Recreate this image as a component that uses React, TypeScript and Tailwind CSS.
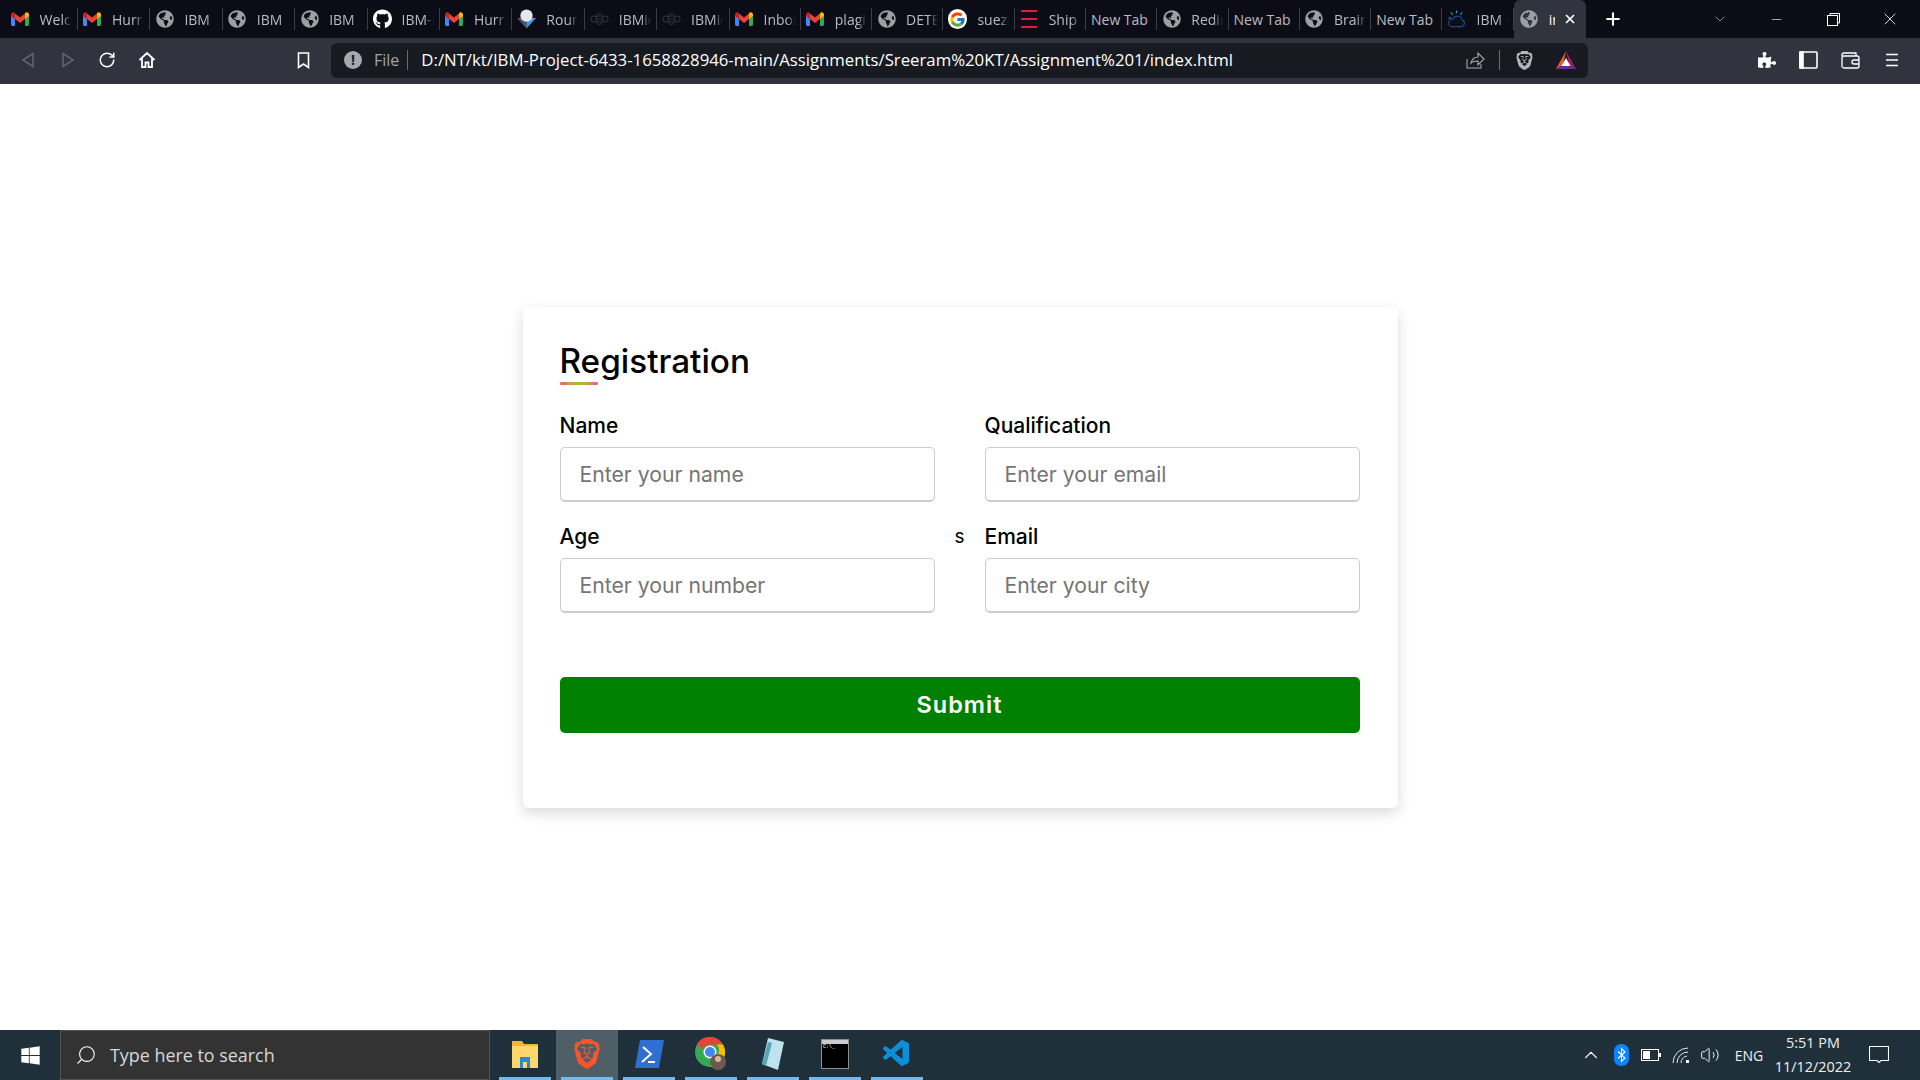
import React from 'react';
import { ChevronDown, ChevronUp, Minus, Plus, RotateCw, Search, Volume2, X } from 'lucide-react';
import { FaGithub, FaGlobeAmericas, FaPuzzlePiece, FaWindows } from 'react-icons/fa';
import { FcGoogle } from 'react-icons/fc';
import { SiBrave } from 'react-icons/si';
import { VscVscode } from 'react-icons/vsc';

const GmailIcon = () => (
  <svg width="18" height="14" viewBox="0 0 18 14">
    <path d="M0 2.5V12.6c0 .8.6 1.4 1.3 1.4H4V6.5z" fill="#4285f4" />
    <path d="M18 2.5V12.6c0 .8-.6 1.4-1.3 1.4H14V6.5z" fill="#34a853" />
    <path d="M4 7V1.6L9 5.6l5-4V7L9 11z" fill="#ea4335" />
    <path d="M0 2.5C0 .7 2-.5 3.3.5L4 1.6V7L0 4z" fill="#c5221f" />
    <path d="M18 2.5c0-1.8-2-3-3.300-2L14 1.600V7l4-3z" fill="#fbbc04" />
  </svg>
);

const CubeIcon = () => (
  <svg width="20" height="20" viewBox="0 0 20 20">
    <path d="M0 9l10 11V9z" fill="#4b5563" />
    <path d="M20 9L10 20V9z" fill="#3d9be0" />
    <circle cx="10" cy="6.500" r="6.500" fill="#e5e7eb" />
  </svg>
);

const BeeIcon = () => (
  <svg width="20" height="14" viewBox="0 0 20 14" fill="none" stroke="#2b2f38" strokeWidth="1.200">
    <ellipse cx="10" cy="7" rx="3.500" ry="6" />
    <circle cx="4" cy="7" r="3" />
    <circle cx="16" cy="7" r="3" />
    <path d="M6.500 4h7M6.500 7h7M6.500 10h7" />
  </svg>
);

const ShipIcon = () => (
  <svg width="16" height="18" viewBox="0 0 16 18" fill="#e11d3c">
    <rect y="0" width="16" height="2" />
    <rect y="8" width="16" height="2" />
    <rect y="16" width="16" height="2" />
  </svg>
);

const IbmCloudIcon = () => (
  <svg width="20" height="20" viewBox="0 0 20 20" fill="none" strokeWidth="1.200">
    <path d="M5 18h10a3.500 3.500 0 0 0 1-6.800A5 5 0 0 0 6.500 10 4 4 0 0 0 5 18z" stroke="#14508c" />
    <path d="M10 1v3M4 3l2 2.500M16 3l-2 2.500M1.500 9h2.500" stroke="#1ba1c4" />
  </svg>
);

const BatIcon = () => (
  <svg width="20" height="18" viewBox="0 0 20 18">
    <path d="M10 0L0 18h6z" fill="#f15a29" />
    <path d="M10 0l10 18h-6z" fill="#9e1f63" />
    <path d="M0 18l4-3h12l4 3z" fill="#662d91" />
    <path d="M10 7l4.500 8h-9z" fill="#ffffff" />
  </svg>
);

const BluetoothIcon = () => (
  <svg width="15" height="22" viewBox="0 0 15 22">
    <rect width="15" height="22" rx="7" fill="#0a84ff" />
    <path d="M4 7.500l7 6.500-3.500 3.500V4.500L11 8l-7 6.500" fill="none" stroke="#fff" strokeWidth="1.100" />
  </svg>
);

const BatteryIcon = () => (
  <svg width="20" height="12" viewBox="0 0 20 12">
    <rect x=".5" y=".5" width="17" height="11" fill="none" stroke="#fff" />
    <rect x="2" y="2" width="7" height="8" fill="#fff" />
    <rect x="18" y="4" width="2" height="4" fill="#fff" />
  </svg>
);

const WifiIcon = () => (
  <svg width="18" height="18" viewBox="0 0 18 18" fill="none" stroke="#e5e7eb" strokeWidth="1">
    <path d="M1 17A15 15 0 0 1 16 2M5 17A11 11 0 0 1 16 6M9 17a7 7 0 0 1 6-7" />
    <rect x="14" y="14" width="3" height="3" fill="#fff" stroke="none" />
  </svg>
);

const ChromeIcon = () => (
  <svg width="32" height="34" viewBox="0 0 32 34">
    <circle cx="15" cy="15" r="15" fill="#34a853" />
    <path d="M15 0a15 15 0 0 1 13 7.500H15a7.500 7.500 0 0 0-7 4.500L2 7a15 15 0 0 1 13-7z" fill="#ea4335" />
    <path d="M28 7.500A15 15 0 0 1 15 30l6.500-11a7.500 7.500 0 0 0 0-11.500z" fill="#fbbc04" />
    <circle cx="15" cy="15" r="6.500" fill="#fff" />
    <circle cx="15" cy="15" r="5" fill="#4285f4" />
    <circle cx="23" cy="25" r="8" fill="#6b5a50" />
    <circle cx="23" cy="22" r="3" fill="#d9b8a0" />
  </svg>
);

const tabs = [
  { icon: 'gmail', title: 'Welcome' },
  { icon: 'gmail', title: 'Hurray' },
  { icon: 'globe', title: 'IBM' },
  { icon: 'globe', title: 'IBM' },
  { icon: 'globe', title: 'IBM' },
  { icon: 'github', title: 'IBM-Project' },
  { icon: 'gmail', title: 'Hurray' },
  { icon: 'cube', title: 'Round' },
  { icon: 'bee', title: 'IBMid' },
  { icon: 'bee', title: 'IBMid' },
  { icon: 'gmail', title: 'Inbox' },
  { icon: 'gmail', title: 'plagiarism' },
  { icon: 'globe', title: 'DETECT' },
  { icon: 'google', title: 'suezcanal' },
  { icon: 'ship', title: 'Ship' },
  { icon: '', title: 'New Tab' },
  { icon: 'globe', title: 'Redirect' },
  { icon: '', title: 'New Tab' },
  { icon: 'globe', title: 'Brain' },
  { icon: '', title: 'New Tab' },
  { icon: 'cloud', title: 'IBM Cloud' },
];

const TabIcon = ({ name }: { name: string }) => {
  if (name === 'gmail') return <GmailIcon />;
  if (name === 'globe') return <FaGlobeAmericas className="text-[18px] text-[#9aa0a6]" />;
  if (name === 'github') return <FaGithub className="text-[20px] text-white" />;
  if (name === 'cube') return <CubeIcon />;
  if (name === 'bee') return <BeeIcon />;
  if (name === 'google') return <span className="flex h-5 w-5 items-center justify-center rounded-full bg-white"><FcGoogle className="text-[17px]" /></span>;
  if (name === 'ship') return <ShipIcon />;
  return <IbmCloudIcon />;
};

const TabBar = () => (
  <div className="flex h-[38px] items-stretch bg-[#0b0c16] pl-[5.6px]">
    {tabs.map((tab, index) => (
      <div key={index} className={`flex shrink-0 items-center py-[8px] ${index < 10 ? 'w-[72.4px]' : 'w-[71.3px]'}`}>
        <div className="flex h-full min-w-0 flex-1 items-center overflow-hidden whitespace-nowrap pl-[5px] text-[14px] text-[#b9bcc4]">
          {tab.icon && (
            <span className="mr-[10px] flex w-[19px] shrink-0 justify-center">
              <TabIcon name={tab.icon} />
            </span>
          )}
          <span className={tab.icon ? 'w-[32px] overflow-hidden [mask-image:linear-gradient(to_right,black_70%,transparent)]' : ''}>{tab.title}</span>
        </div>
        <div className="h-full w-px shrink-0 bg-[#3a3c46]" />
      </div>
    ))}
    <div className="flex w-[72px] shrink-0 items-center rounded-t-[6px] bg-[#31343f] pl-[6px] text-[14px] text-white">
      <FaGlobeAmericas className="mr-[11px] shrink-0 text-[18px] text-[#9aa0a6]" />
      <span className="w-[6px] overflow-hidden">index</span>
      <X className="ml-[8px] shrink-0" size={14} strokeWidth={3} />
    </div>
    <div className="ml-[17px] flex items-center text-white">
      <Plus size={20} strokeWidth={2.5} />
    </div>
    <div className="ml-[89px] flex items-center text-[#c4c6cc]">
      <ChevronDown size={16} strokeWidth={1} />
    </div>
    <div className="ml-[20px] flex w-[57px] items-center justify-center text-white">
      <Minus size={15} strokeWidth={1} />
    </div>
    <div className="flex w-[57px] items-center justify-center">
      <svg width="13" height="13" viewBox="0 0 13 13" fill="none" stroke="#fff">
        <rect x=".5" y="2.500" width="10" height="10" />
        <path d="M3 2.500V.5h9.500V10H10.500" />
      </svg>
    </div>
    <div className="flex w-[57px] items-center justify-center text-white">
      <X size={20} strokeWidth={1} />
    </div>
  </div>
);

const ToolButton = ({ children, width = 'w-[40px]' }: { children: React.ReactNode; width?: string }) => (
  <div className={`flex h-full shrink-0 items-center justify-center ${width}`}>{children}</div>
);

const Toolbar = () => (
  <div className="flex h-[46px] items-center bg-[#31343f] pb-[2px] pl-[8px] text-white">
    <ToolButton>
      <svg width="14" height="16" viewBox="0 0 14 16" fill="none" stroke="#6b6e78" strokeWidth="1.300"><path d="M12 1.500v13L2 8z" /></svg>
    </ToolButton>
    <ToolButton width="w-[39px]">
      <svg width="14" height="16" viewBox="0 0 14 16" fill="none" stroke="#6b6e78" strokeWidth="1.300"><path d="M2 1.500v13L12 8z" /></svg>
    </ToolButton>
    <ToolButton>
      <RotateCw size={18} strokeWidth={2} />
    </ToolButton>
    <ToolButton>
      <svg width="18" height="18" viewBox="0 0 18 18" fill="none" stroke="#fff" strokeWidth="1.800"><path d="M1.500 9L9 2l7.500 7M4 7.500V16h3.500v-4.500h3V16H14V7.500" /></svg>
    </ToolButton>
    <div className="ml-[116px] flex h-full">
      <ToolButton>
        <svg width="13" height="17" viewBox="0 0 13 17" fill="none" stroke="#fff" strokeWidth="1.600"><path d="M1.500 1h10v14.500L6.500 12l-5 3.500z" /></svg>
      </ToolButton>
    </div>
    <div className="ml-[8px] flex h-[35px] w-[1257px] shrink-0 items-center rounded-[6px] bg-[#181a21]">
      <span className="ml-[13px] flex h-[18px] w-[18px] items-center justify-center rounded-full bg-[#a5a8ae] text-[14px] font-bold leading-none text-[#181a21]">!</span>
      <span className="ml-[12px] text-[16px] text-[#a0a3aa]">File</span>
      <span className="ml-[8px] h-[20px] w-px bg-[#6b6e78]" />
      <span className="ml-[13px] whitespace-nowrap text-[16.75px] text-white">D:/NT/kt/IBM-Project-6433-1658828946-main/Assignments/Sreeram%20KT/Assignment%201/index.html</span>
      <div className="ml-auto flex items-center">
        <svg width="20" height="20" viewBox="0 0 20 20" fill="none" stroke="#a5a8ae" strokeWidth="1.100"><path d="M2 9v9h14v-4M6 13c1-4 4-6 7-6V3l6 6-6 6v-4c-3 0-5 0-7 2z" /></svg>
        <span className="ml-[14px] h-[20px] w-px bg-[#6b6e78]" />
        <SiBrave className="ml-[15px] text-[19px] text-[#b4b6bc]" />
        <span className="ml-[22px] mr-[12px] flex"><BatIcon /></span>
      </div>
    </div>
    <div className="ml-[158px] flex h-full">
      <ToolButton width="w-[42px]">
        <FaPuzzlePiece className="text-[18px]" />
      </ToolButton>
      <ToolButton width="w-[41px]">
        <svg width="19" height="18" viewBox="0 0 19 18" fill="none" stroke="#fff" strokeWidth="1.600"><rect x="1" y="1" width="17" height="16" rx="1" /><rect x="1" y="1" width="3" height="16" fill="#fff" /></svg>
      </ToolButton>
      <ToolButton width="w-[42px]">
        <svg width="19" height="17" viewBox="0 0 19 17" fill="none" stroke="#fff" strokeWidth="1.300"><path d="M3 1h12v3" /><rect x="1" y="4" width="17" height="12" rx="2" /><path d="M1 4V3a2 2 0 0 1 2-2M18 8h-5a2 2 0 0 0 0 4h5" /></svg>
      </ToolButton>
      <ToolButton width="w-[42px]">
        <svg width="14" height="14" viewBox="0 0 14 14" stroke="#fff" strokeWidth="1.500"><path d="M1 1.500h12M1 7h12M1 12.500h12" /></svg>
      </ToolButton>
    </div>
  </div>
);

const Field = ({ label, placeholder }: { label: string; placeholder: string }) => (
  <div className="flex flex-col">
    <label className="mb-[6px] text-[21px] font-medium leading-[30px] text-black">{label}</label>
    <input
      type="text"
      placeholder={placeholder}
      className="h-[55px] w-full rounded-[5px] border border-b-2 border-[#cccccc] bg-white pl-[19px] text-[21.2px] outline-none placeholder:text-[#757575]"
    />
  </div>
);

const RegistrationForm = () => (
  <div className="w-[875px] rounded-[6px] bg-white pl-[37px] pr-[38px] pt-[31px] pb-[75px] shadow-[0_5px_14px_rgba(0,0,0,0.15)] font-['Inter',sans-serif]">
    <div className="relative pb-[5px]">
      <h1 className="text-[33.3px] font-medium leading-[46px] text-black">Registration</h1>
      <span className="absolute bottom-[4px] left-0 h-[3px] w-[38px] rounded-[2px] bg-gradient-to-r from-[#f0506e] via-[#9ac80a] to-[#f0506e]" />
    </div>
    <div className="mt-[22px] grid grid-cols-[375px_50px_375px] gap-y-[20px]">
      <Field label="Name" placeholder="Enter your name" />
      <div />
      <Field label="Qualification" placeholder="Enter your email" />
      <Field label="Age" placeholder="Enter your number" />
      <div className="text-center text-[19px] leading-[30px] text-black">s</div>
      <Field label="Email" placeholder="Enter your city" />
    </div>
    <button className="mt-[64px] h-[56px] w-full rounded-[5px] bg-[#008000] text-[23.5px] font-semibold tracking-[1px] text-white">
      Submit
    </button>
  </div>
);

const apps = [
  { active: false, node: (
    <svg width="28" height="30" viewBox="0 0 28 30">
      <path d="M1 2h10l2 3h14v24H1z" fill="#f2b632" />
      <path d="M1 7h26v22H1z" fill="#fdd868" />
      <path d="M9 29V18h10v11h-3v-6h-4v6z" fill="#2b88d8" />
    </svg>
  ) },
  { active: true, node: <SiBrave className="text-[30px] text-[#fb542b]" /> },
  { active: false, node: (
    <svg width="30" height="30" viewBox="0 0 30 30">
      <path d="M6 1h24l-5 28H1z" fill="#2f6fd0" />
      <path d="M9 8l8 7-9 8M14 23h7" fill="none" stroke="#fff" strokeWidth="2" />
    </svg>
  ) },
  { active: false, node: <ChromeIcon /> },
  { active: false, node: (
    <svg width="26" height="34" viewBox="0 0 26 34">
      <path d="M8 1l16 4-6 28L2 27z" fill="#bfe3ee" />
      <path d="M2 27l6-22 4 1-6 23z" fill="#5ba4b8" />
    </svg>
  ) },
  { active: false, node: (
    <span className="flex h-[30px] w-[28px] flex-col border border-[#8a8f94] bg-black">
      <span className="h-[4px] bg-[#c8ccd0]" />
      <span className="pl-[1px] pt-[1px] font-['Liberation_Mono',monospace] text-[5px] leading-[5px] text-white">C:\_</span>
    </span>
  ) },
  { active: false, node: <VscVscode className="text-[32px] text-[#0a8fdc]" /> },
];

const Taskbar = () => (
  <div className="flex h-[50px] items-stretch bg-[#20303a] text-white font-['Open_Sans',sans-serif]">
    <div className="flex w-[60px] shrink-0 items-center justify-center">
      <FaWindows className="text-[21px]" />
    </div>
    <div className="flex w-[430px] shrink-0 items-center border border-[#525252] bg-[#333333] pl-[14px]">
      <Search size={22} strokeWidth={1.2} className="-scale-x-100" />
      <span className="ml-[13px] text-[17.9px] text-[#d8d8d8]">Type here to search</span>
    </div>
    <div className="ml-[4px] flex">
      {apps.map((app, index) => (
        <div key={index} className={`flex w-[62px] flex-col items-center ${app.active ? 'bg-[#4f5f68]' : ''}`}>
          <div className="flex flex-1 items-center justify-center">{app.node}</div>
          <div className="mx-[3px] h-[3px] w-[52px] bg-[#76b9ed]" />
        </div>
      ))}
    </div>
    <div className="ml-auto flex items-center text-[#f0f0f0]">
      <span className="flex w-[30px] justify-center"><ChevronUp size={22} strokeWidth={1.2} /></span>
      <span className="flex w-[30px] justify-center"><BluetoothIcon /></span>
      <span className="flex w-[30px] justify-center"><BatteryIcon /></span>
      <span className="flex w-[30px] justify-center"><WifiIcon /></span>
      <span className="flex w-[28px] justify-center"><Volume2 size={20} strokeWidth={1.200} /></span>
      <span className="ml-[6px] w-[38px] text-center text-[14px]">ENG</span>
      <div className="ml-[2px] w-[86px] text-center text-[14.4px] leading-[24px]">
        <div>5:51 PM</div>
        <div>11/12/2022</div>
      </div>
      <span className="ml-[12px] mr-[30px] flex w-[22px] justify-center">
        <svg width="20" height="18" viewBox="0 0 20 18" fill="none" stroke="#fff" strokeWidth="1.100"><path d="M.5.5h19v14H12l-2 2-2-2H.5z" /></svg>
      </span>
    </div>
  </div>
);

const App = () => (
  <div className="flex h-screen w-full flex-col overflow-hidden bg-white">
    <div className="font-['Open_Sans',sans-serif]">
      <TabBar />
      <Toolbar />
    </div>
    <main className="flex flex-1 items-center justify-center">
      <RegistrationForm />
    </main>
    <Taskbar />
  </div>
);

export default App;
